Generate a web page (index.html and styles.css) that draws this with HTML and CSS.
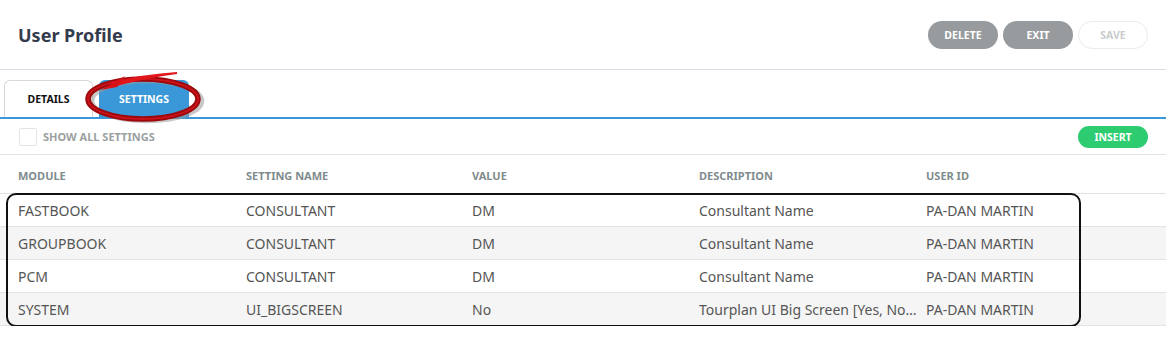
FILE: index.html
```html
<!DOCTYPE html>
<html lang="en">

<head>
  <meta charset="UTF-8">
  <title>User Profile</title>
  <link rel="stylesheet" href="styles.css">
</head>

<body>
  <div class="page">
    <div class="page__header">
      <h1 class="page__title">User Profile</h1>
      <div class="page__actions">
        <button class="btn btn--grey">DELETE</button>
        <button class="btn btn--grey">EXIT</button>
        <button class="btn btn--ghost">SAVE</button>
      </div>
    </div>

    <div class="tabs">
      <div class="tabs__item">DETAILS</div>
      <div class="tabs__item tabs__item--active">SETTINGS</div>
      <!-- red marker drawn over the active tab -->
      <svg class="marker" width="130" height="60" viewBox="0 0 130 60">
        <ellipse cx="62" cy="33" rx="55" ry="20" fill="none" stroke="#9a9a9a" stroke-width="4.5" opacity="0.55" />
        <ellipse cx="58" cy="31" rx="55" ry="20" fill="none" stroke="#9c070b" stroke-width="5.5" />
        <ellipse cx="58" cy="31" rx="55" ry="20" fill="none" stroke="#c8121a" stroke-width="2" />
        <path d="M26 14 Q60 6 92 4 L92 6 Q60 10 28 19 Z" fill="#e0161b" />
        <path d="M16 22 L40 8 L32 19 Z" fill="#d81217" />
      </svg>
    </div>

    <div class="toolbar">
      <label class="toolbar__check"><span class="checkbox"></span>SHOW ALL SETTINGS</label>
      <button class="btn btn--green">INSERT</button>
    </div>

    <div class="grid">
      <div class="grid__row grid__row--head">
        <div>MODULE</div>
        <div>SETTING NAME</div>
        <div>VALUE</div>
        <div>DESCRIPTION</div>
        <div>USER ID</div>
      </div>
      <div class="grid__body">
        <div class="grid__row">
          <div>FASTBOOK</div>
          <div>CONSULTANT</div>
          <div>DM</div>
          <div>Consultant Name</div>
          <div>PA-DAN MARTIN</div>
        </div>
        <div class="grid__row">
          <div>GROUPBOOK</div>
          <div>CONSULTANT</div>
          <div>DM</div>
          <div>Consultant Name</div>
          <div>PA-DAN MARTIN</div>
        </div>
        <div class="grid__row">
          <div>PCM</div>
          <div>CONSULTANT</div>
          <div>DM</div>
          <div>Consultant Name</div>
          <div>PA-DAN MARTIN</div>
        </div>
        <div class="grid__row">
          <div>SYSTEM</div>
          <div>UI_BIGSCREEN</div>
          <div>No</div>
          <div title="Tourplan UI Big Screen [Yes, No] - default No">Tourplan UI Big Screen [Yes, No] - default No</div>
          <div>PA-DAN MARTIN</div>
        </div>
        <div class="highlight"></div>
      </div>
    </div>
  </div>
</body>

</html>
```

FILE: styles.css
```css
html {
  box-sizing: border-box;
}

*,
*::before,
*::after {
  box-sizing: inherit;
}

body {
  margin: 0;
  background: #fff;
  font-family: "Noto Sans", "Open Sans", sans-serif;
  color: #555;
}

button {
  border: 0;
  font-family: inherit;
  cursor: pointer;
}

/* Header */

.page__header {
  display: flex;
  align-items: center;
  justify-content: space-between;
  height: 70px;
  padding: 0 18px;
  border-bottom: 1px solid #dcdce6;
}

.page__title {
  margin: 0;
  font-size: 18px;
  font-weight: 700;
  color: #343b4c;
}

.page__actions {
  display: flex;
  gap: 5px;
}

.btn {
  height: 28px;
  width: 70px;
  border-radius: 14px;
  font-size: 10.5px;
  font-weight: 700;
  color: #fff;
}

.btn--grey {
  background-color: #979b9e;
}

.btn--ghost {
  background-color: #fff;
  border: 1.5px solid #e7ecec;
  color: #c9cccd;
}

.btn--green {
  height: 22px;
  background-color: #2ecc71;
  border-radius: 11px;
}

/* Tabs */

.tabs {
  position: relative;
  display: flex;
  gap: 6px;
  height: 49px;
  padding: 10px 0 0 4px;
  border-bottom: 2px solid #3a97d8;
}

.tabs__item {
  display: flex;
  align-items: center;
  justify-content: center;
  width: 89px;
  border: 1px solid #d8d8d8;
  border-bottom: 0;
  border-radius: 6px 6px 0 0;
  font-size: 10.5px;
  font-weight: 700;
  color: #111;
}

.tabs__item--active {
  width: 90px;
  background-color: #3a97d8;
  border-color: #3a97d8;
  color: #fff;
}

.marker {
  position: absolute;
  left: 85px;
  top: -2px;
}

/* Toolbar */

.toolbar {
  display: flex;
  align-items: center;
  justify-content: space-between;
  height: 36px;
  padding: 0 18px 0 19px;
  border-bottom: 1px solid #e2e2e2;
}

.toolbar__check {
  display: flex;
  align-items: center;
  gap: 6px;
  font-size: 11px;
  font-weight: 700;
  color: #9aa0a0;
}

.checkbox {
  width: 18px;
  height: 18px;
  border: 1px solid #e4e4e4;
  border-radius: 2px;
}

/* Grid */

.grid__row {
  display: grid;
  grid-template-columns: 228px 226px 227px 227px 1fr;
  align-items: center;
  height: 33px;
  padding-left: 18px;
  border-bottom: 1px solid #e2e2e2;
  font-size: 14px;
}

.grid__row > div {
  overflow: hidden;
  white-space: nowrap;
  text-overflow: ellipsis;
  padding-right: 8px;
}

.grid__row--head {
  height: 39px;
  padding-top: 2px;
  font-size: 11px;
  font-weight: 700;
  color: #7f8c8d;
}

.grid__body {
  position: relative;
}

.grid__body .grid__row:nth-child(even) {
  background-color: #f5f5f5;
}

.highlight {
  position: absolute;
  left: 6px;
  top: -1px;
  width: 1075px;
  height: 134px;
  border: 2px solid #111;
  border-radius: 10px;
}
```
